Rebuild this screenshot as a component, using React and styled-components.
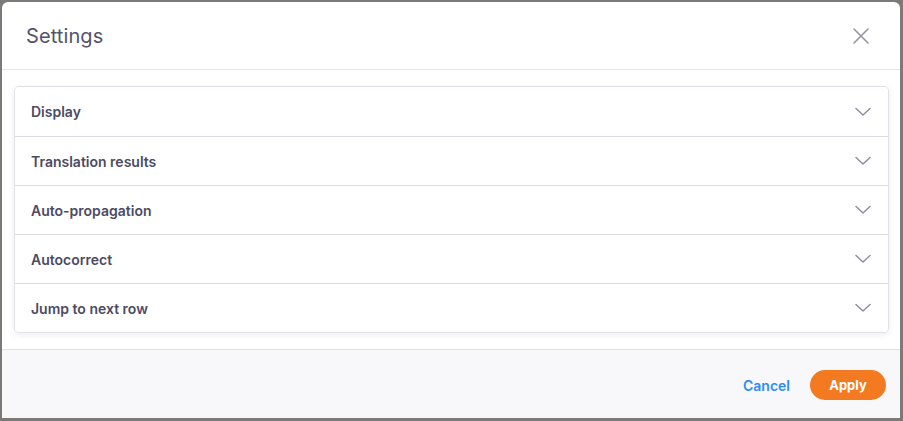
import { useState } from 'react';
import styled, { createGlobalStyle } from 'styled-components';

const GlobalStyle = createGlobalStyle`
  html, body {
    margin: 0;
    padding: 0;
    height: 100%;
  }
  body {
    font-family: Inter, "Noto Sans", sans-serif;
    background: #7b7a78;
  }
  #root {
    height: 100%;
  }
`;

const Backdrop = styled.div`
  width: 903px;
  height: 421px;
  box-sizing: border-box;
  padding: 2px 3px 3px 2px;
  background: #7b7a78;
  display: flex;
  overflow: hidden;
`;

const Modal = styled.div`
  flex: 1;
  display: flex;
  flex-direction: column;
  background: #ffffff;
  border-radius: 6px 6px 0 0;
  overflow: hidden;
`;

const Header = styled.div`
  height: 67px;
  flex-shrink: 0;
  display: flex;
  align-items: center;
  justify-content: space-between;
  padding: 0 30px 0 24px;
  border-bottom: 1px solid #e6e6eb;
`;

const Title = styled.h2`
  margin: 0;
  font-size: 20px;
  font-weight: 400;
  color: #545369;
  letter-spacing: 0.1px;
`;

const CloseButton = styled.button`
  border: none;
  background: none;
  padding: 0;
  width: 18px;
  height: 18px;
  display: flex;
  align-items: center;
  justify-content: center;
  cursor: pointer;
  color: #9695a8;
`;

const Body = styled.div`
  flex: 1;
  padding: 16px 11px 16px 12px;
`;

const Accordion = styled.div`
  border: 1px solid #e0e0e6;
  border-radius: 5px;
  background: #fff;
  box-shadow: 0 2px 6px rgba(40, 40, 70, 0.08);
  overflow: hidden;
`;

const Row = styled.button`
  width: 100%;
  height: 49px;
  display: flex;
  align-items: center;
  justify-content: space-between;
  padding: 0 17px 0 16px;
  background: #fff;
  border: none;
  border-top: ${(p) => (p.$first ? 'none' : '1px solid #dcdce2')};
  box-sizing: border-box;
  font-family: inherit;
  font-size: 14px;
  font-weight: 600;
  color: #4c4b62;
  cursor: pointer;
  text-align: left;
`;

const Footer = styled.div`
  height: 69px;
  flex-shrink: 0;
  display: flex;
  align-items: center;
  justify-content: flex-end;
  gap: 20px;
  padding: 2px 14px 0 0;
  box-sizing: border-box;
  background: #f8f8fa;
  border-top: 1px solid #e2e2e8;
`;

const TextButton = styled.button`
  border: none;
  background: none;
  font-family: inherit;
  font-size: 14px;
  font-weight: 600;
  color: #2f8ef0;
  cursor: pointer;
  padding: 0;
`;

const PrimaryButton = styled.button`
  border: none;
  height: 30px;
  width: 76px;
  border-radius: 15px;
  background: #f47a22;
  color: #fff;
  font-family: inherit;
  font-size: 13px;
  font-weight: 700;
  cursor: pointer;
`;

function Chevron() {
  return (
    <svg width="16" height="10" viewBox="0 0 16 10" fill="none">
      <path d="M1 1.5 L8 8 L15 1.5" stroke="#8e8da2" strokeWidth="1.5" strokeLinecap="round" strokeLinejoin="round" />
    </svg>
  );
}

const sections = ['Display', 'Translation results', 'Auto-propagation', 'Autocorrect', 'Jump to next row'];

export default function App() {
  const [open, setOpen] = useState(null);

  return (
    <>
      <GlobalStyle />
      <Backdrop>
        <Modal>
          <Header>
            <Title>Settings</Title>
            <CloseButton aria-label="Close">
              <svg width="16" height="16" viewBox="0 0 16 16">
                <path d="M1 1 L15 15 M15 1 L1 15" stroke="#9695a8" strokeWidth="1.6" strokeLinecap="round" />
              </svg>
            </CloseButton>
          </Header>
          <Body>
            <Accordion>
              {sections.map((s, i) => (
                <Row key={s} $first={i === 0} onClick={() => setOpen(open === i ? null : i)}>
                  {s}
                  <Chevron />
                </Row>
              ))}
            </Accordion>
          </Body>
          <Footer>
            <TextButton>Cancel</TextButton>
            <PrimaryButton>Apply</PrimaryButton>
          </Footer>
        </Modal>
      </Backdrop>
    </>
  );
}
